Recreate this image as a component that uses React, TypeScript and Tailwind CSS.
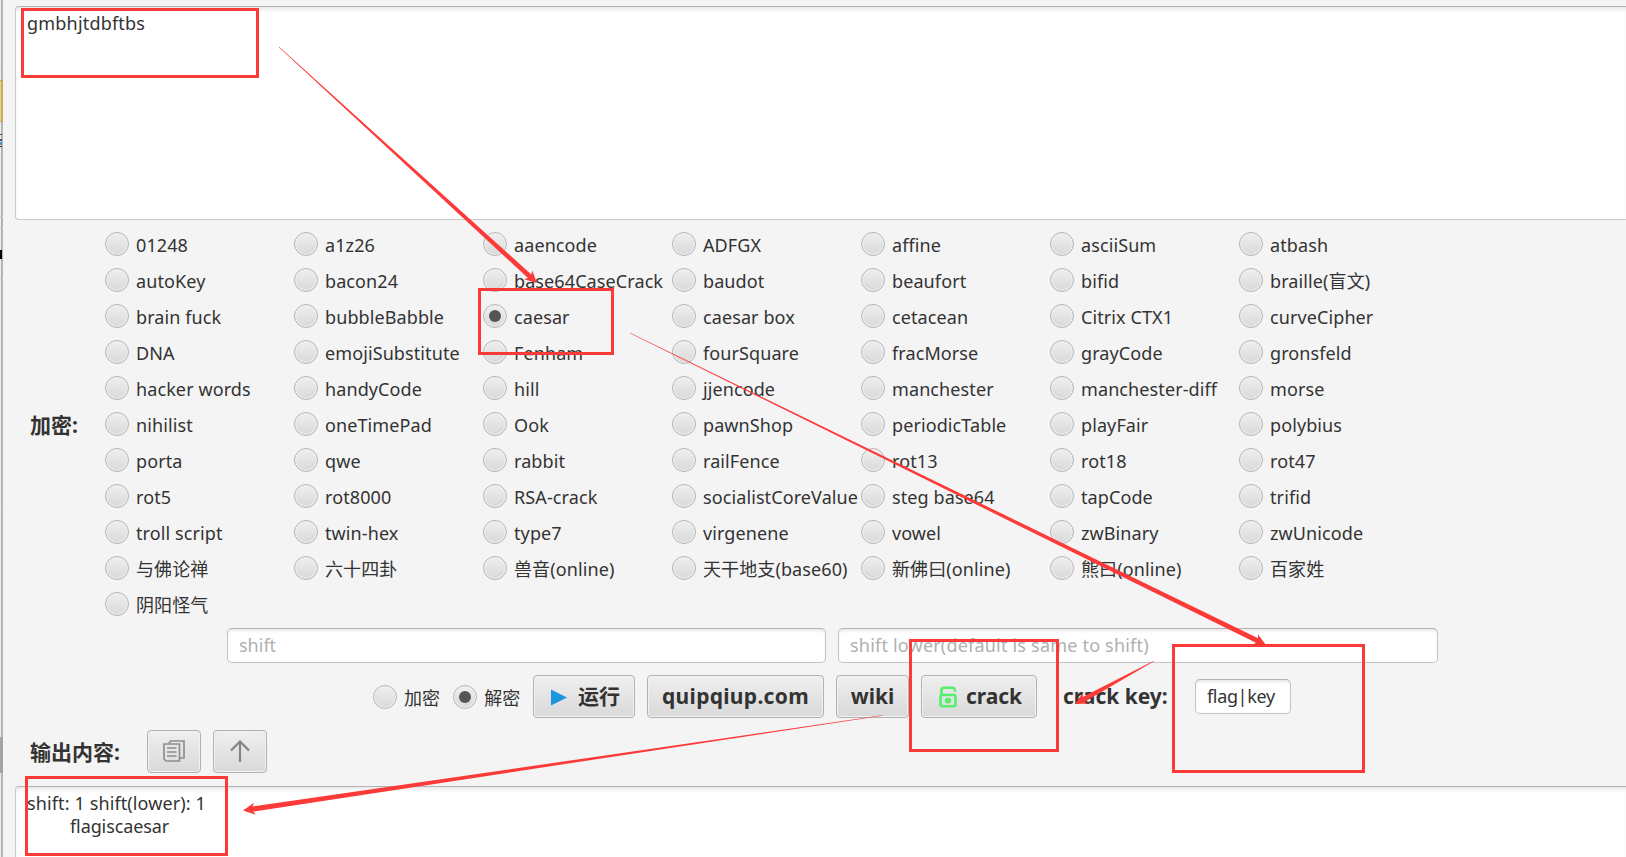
import React from "react";

const options = [
  "01248", "a1z26", "aaencode", "ADFGX", "affine", "asciiSum", "atbash",
  "autoKey", "bacon24", "base64CaseCrack", "baudot", "beaufort", "bifid", "braille(盲文)",
  "brain fuck", "bubbleBabble", "caesar", "caesar box", "cetacean", "Citrix CTX1", "curveCipher",
  "DNA", "emojiSubstitute", "Fenham", "fourSquare", "fracMorse", "grayCode", "gronsfeld",
  "hacker words", "handyCode", "hill", "jjencode", "manchester", "manchester-diff", "morse",
  "nihilist", "oneTimePad", "Ook", "pawnShop", "periodicTable", "playFair", "polybius",
  "porta", "qwe", "rabbit", "railFence", "rot13", "rot18", "rot47",
  "rot5", "rot8000", "RSA-crack", "socialistCoreValue", "steg base64", "tapCode", "trifid",
  "troll script", "twin-hex", "type7", "virgenene", "vowel", "zwBinary", "zwUnicode",
  "与佛论禅", "六十四卦", "兽音(online)", "天干地支(base60)", "新佛曰(online)", "熊曰(online)", "百家姓",
  "阴阳怪气",
];

function Radio({ label, on }: { label: string; on?: boolean }) {
  return (
    <div className="flex h-9 min-w-0 items-center gap-[7px] whitespace-nowrap">
      <span className="flex size-6 shrink-0 items-center justify-center rounded-full border-[1.5px] border-[#b5b5b5] bg-linear-to-b from-[#efefef] to-[#d9d9d9] shadow-[inset_0_0_0_1px_#f0f0f0]">
        {on && <span className="size-3 rounded-full bg-[#555]" />}
      </span>
      <span className="pt-[2px] leading-6 tracking-[0.1px]">{label}</span>
    </div>
  );
}

const button =
  "flex h-[43px] shrink-0 items-center justify-center rounded-[4px] border border-[#b2b2b2] bg-linear-to-b from-[#efefef] to-[#d9d9d9] text-[21px] font-bold whitespace-nowrap shadow-[inset_0_0_0_1px_#f1f1f1]";
const field =
  "flex h-[35px] shrink-0 items-center rounded-[5px] border border-[#c4c4c4] border-t-[#b3b3b3] bg-white pl-[11px] whitespace-nowrap shadow-[inset_0_3px_3px_-1px_#e8e8e8]";

type Point = [number, number];

function Arrow({ from, to, width = 5, head = 12 }: { from: Point; to: Point; width?: number; head?: number }) {
  const dx = to[0] - from[0];
  const dy = to[1] - from[1];
  const len = Math.hypot(dx, dy);
  const angle = (Math.atan2(dy, dx) * 180) / Math.PI;
  const neck = len - head;
  return (
    <polygon
      transform={`translate(${from[0]} ${from[1]}) rotate(${angle})`}
      points={`0,-0.2 ${neck + 2},${-width / 2} ${neck},${-head / 2} ${len},0 ${neck},${head / 2} ${neck + 2},${width / 2} 0,0.2`}
    />
  );
}

export default function App() {
  return (
    <div className="flex relative h-[857px] w-[1626px] overflow-hidden bg-[#f4f4f4] font-['Noto_Sans','Noto_Sans_CJK_SC',sans-serif] text-[18px] text-[#333]">
      <div className="flex w-[3px] shrink-0 flex-col bg-linear-to-r from-[#ececec] from-33% to-[#b5b5b5] to-34%">
        <div className="mt-[66px] h-px bg-[#c4c4c4]" />
        <div className="mt-[13px] h-[42px] border-y border-[#c9a94a] bg-linear-to-r from-[#ecd27c] from-33% to-[#c2ad68] to-34%" />
        <div className="mt-3 h-px w-[2px] bg-[#444]" />
        <div className="mt-[4px] h-[2px] w-[2px] bg-[#555]" />
        <div className="mt-px h-[3px] w-[2px] bg-[#4b94c4]" />
        <div className="mt-px h-px w-[2px] bg-[#333]" />
        <div className="mt-[69px] h-px bg-[#c4c4c4]" />
        <div className="mt-[10px] h-px bg-[#c4c4c4]" />
        <div className="mt-[22px] h-[9px] w-[2px] bg-black" />
        <div className="mt-[19px] h-px bg-[#c4c4c4]" />
        <div className="mt-[458px] h-9 bg-[#a3a3a3]" />
      </div>
      <div className="flex min-w-0 flex-1 flex-col pl-3">
        <div className="mt-[6px] h-[214px] shrink-0 rounded-l-[4px] border border-r-0 border-[#c8c8c8] border-t-[#b3b3b3] bg-white pt-[4px] pl-[11px] leading-6 tracking-[0.2px] shadow-[inset_0_4px_4px_-2px_#e4e4e4]">
          gmbhjtdbftbs
        </div>
        <div className="mt-[6px] flex h-[396px] shrink-0 items-center">
          <div className="w-[90px] shrink-0 pt-[4px] pl-[15px] text-[21px] font-bold">加密:</div>
          <div className="grid grid-cols-[repeat(7,189px)]">
            {options.map((o) => (
              <Radio key={o} label={o} on={o === "caesar"} />
            ))}
          </div>
        </div>
        <div className="mt-[6px] flex gap-3 pl-[212px] text-[#b0b0b0]">
          <div className={field + " w-[599px]"}>shift</div>
          <div className={field + " w-[600px] tracking-[0.2px]"}>shift lower(default is same to shift)</div>
        </div>
        <div className="mt-3 flex h-[43px] shrink-0 items-center pl-[358px]">
          <div className="flex w-[160px] shrink-0 gap-[13px]">
            <Radio label="加密" />
            <Radio label="解密" on />
          </div>
          <div className="flex gap-3">
            <div className={button + " w-[102px] gap-[11px] pt-px pl-[3px]"}>
              <svg width="16" height="17" viewBox="0 0 16 17"><path d="M0 0.5L16 8.5L0 16.5Z" fill="#1a95de" /></svg>
              运行
            </div>
            <div className={button + " w-[177px] pt-px tracking-[0.3px]"}>quipqiup.com</div>
            <div className={button + " w-[73px] pt-px"}>wiki</div>
            <div className={button + " w-[116px] gap-[9px] pt-px pl-[3px]"}>
              <svg width="18" height="22" viewBox="0 0 18 22" fill="none" stroke="#55ef6c" strokeWidth="2.6">
                <path d="M2.5 10V4Q2.5 1.8 5 1.8H13.5Q16 1.8 16 5.5" />
                <rect x="1.5" y="9" width="15" height="11.2" rx="2" />
                <ellipse cx="9" cy="14.6" rx="2" ry="1.5" />
              </svg>
              crack
            </div>
          </div>
          <div className="ml-[26px] w-[132px] shrink-0 pt-px text-[21px] font-bold whitespace-nowrap">crack key:</div>
          <div className={field + " w-[96px] tracking-[-0.35px]"}>flag|key</div>
        </div>
        <div className="mt-3 flex h-[42px] shrink-0 items-center">
          <div className="w-[132px] shrink-0 pt-[4px] pl-[15px] text-[21px] font-bold">输出内容:</div>
          <div className="flex gap-3">
            <div className={button + " w-[54px]"}>
              <svg width="22" height="22" viewBox="0 0 22 22" fill="none" stroke="#8d8d8d" strokeWidth="1.7">
                <path d="M6 3.5L7.5 1H21V18H17" />
                <path d="M1 4H16.5V21H3L1 19Z" />
                <path d="M4 8H13.5M4 12H13.5M4 16H13.5" />
              </svg>
            </div>
            <div className={button + " w-[54px]"}>
              <svg width="20" height="22" viewBox="0 0 20 22" fill="none" stroke="#858585" strokeWidth="2.2">
                <path d="M10 22V2M1 10.5L10 1.5L19 10.5" />
              </svg>
            </div>
          </div>
        </div>
        <div className="mt-[14px] min-h-0 flex-1 rounded-tl-[4px] border border-r-0 border-b-0 border-[#c8c8c8] border-t-[#b3b3b3] bg-white pt-[5px] pl-[11px] leading-[23px] whitespace-pre shadow-[inset_0_4px_4px_-2px_#e4e4e4]">
          <div className="tracking-[0.12px]">shift: 1 shift(lower): 1</div>
          <div className="pl-[43px] tracking-[-0.1px]">flagiscaesar</div>
        </div>
      </div>

      <svg className="absolute inset-0" width="1626" height="857" fill="#fc3a38">
        <g fill="none" stroke="#fc3a38" strokeWidth="3">
          <rect x="22.5" y="9.5" width="235" height="67" />
          <rect x="479.5" y="289.5" width="133" height="64" />
          <rect x="910.5" y="640.5" width="147" height="110" />
          <rect x="1173.5" y="645.5" width="190" height="126" />
          <rect x="26.5" y="777.5" width="200" height="77" />
        </g>
        <Arrow from={[279, 47]} to={[537, 283]} />
        <Arrow from={[630, 333]} to={[1266, 645]} />
        <Arrow from={[1154, 661]} to={[1075, 704]} />
        <Arrow from={[882, 715.5]} to={[243, 810.5]} />
      </svg>
    </div>
  );
}
